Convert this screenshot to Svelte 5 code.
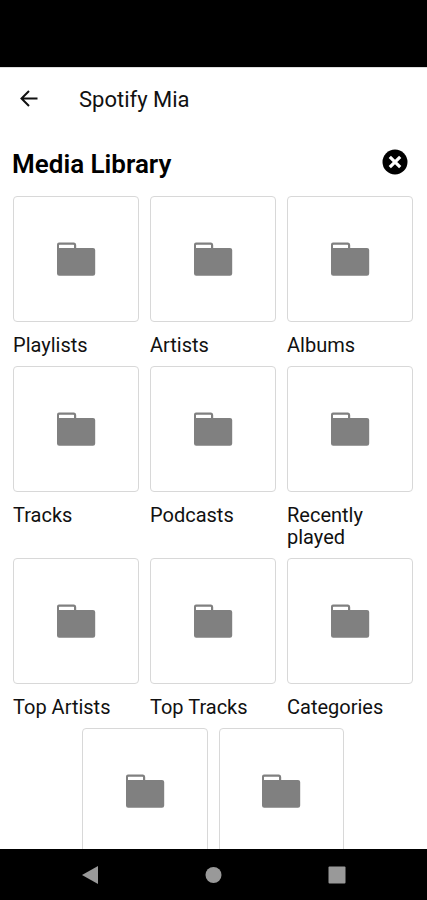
<script lang="ts">
  type Folder = { id: number, title: string }

  let folders: Folder[] = [
    { id: 1, title: 'Playlists' },
    { id: 2, title: 'Artists' },
    { id: 3, title: 'Albums' },
    { id: 4, title: 'Tracks' },
    { id: 5, title: 'Podcasts' },
    { id: 6, title: 'Recently played' },
    { id: 7, title: 'Top Artists' },
    { id: 8, title: 'Top Tracks' },
    { id: 9, title: 'Categories' },
    { id: 10, title: '' },
    { id: 11, title: '' }
  ]
</script>

<div class="screen">
  <div class="status"></div>

  <header class="appbar">
    <button class="icon-btn" aria-label="Back">
      <svg width="20" height="20" viewBox="0 0 20 20" fill="none" stroke="#111" stroke-width="2">
        <path d="M18.5 8.5H3M10 1L2.5 8.5L10 16" />
      </svg>
    </button>
    <span class="device">Spotify Mia</span>
  </header>

  <main>
    <div class="heading">
      <h1>Media Library</h1>
      <button class="icon-btn" aria-label="Close">
        <svg width="26" height="26" viewBox="0 0 26 26">
          <circle cx="13" cy="13" r="12.5" fill="#000" />
          <path d="M7.8 7.8L18.2 18.2M18.2 7.8L7.8 18.2" stroke="#fff" stroke-width="3.2" />
        </svg>
      </button>
    </div>

    <div class="grid">
      {#each folders as folder (folder.id)}
        <button class="item" aria-label={folder.title || 'Folder'}>
          <span class="tile">
            <svg width="40" height="34" viewBox="0 0 40 34">
              <path
                fill="#808080"
                fill-rule="evenodd"
                d="M3 0.5H18Q20.2 0.5 20.2 3V6H37Q39.2 6 39.2 8V31.5Q39.2 33.7 37 33.7H3.2Q1 33.7 1 31.5V2.5Q1 0.5 3 0.5ZM3.5 2.8Q3 2.8 3 3.3V6H18V3.3Q18 2.8 17.5 2.8Z"
              />
            </svg>
          </span>
          <span class="title">{folder.title}</span>
        </button>
      {/each}
    </div>
  </main>

  <nav class="sysnav">
    <button class="icon-btn" aria-label="System back">
      <svg width="18" height="18" viewBox="0 0 18 18"><path d="M17 0V18L1 9Z" fill="#999" /></svg>
    </button>
    <button class="icon-btn" aria-label="Home">
      <svg width="18" height="18" viewBox="0 0 18 18"><circle cx="9.5" cy="9" r="8" fill="#999" /></svg>
    </button>
    <button class="icon-btn" aria-label="Overview">
      <svg width="18" height="18" viewBox="0 0 18 18"><rect x="0.5" y="0.5" width="17" height="17" rx="1" fill="#999" /></svg>
    </button>
  </nav>
</div>

<style>
  .screen {
    display: flex;
    flex-direction: column;
    height: 100vh;
    overflow: hidden;
    background: #fff;
    color: #111;
    font-family: Roboto, "Liberation Sans", sans-serif;
  }
  button {
    margin: 0;
    padding: 0;
    border: 0;
    background: none;
    color: inherit;
    font: inherit;
    text-align: left;
    cursor: pointer;
  }
  .icon-btn { display: flex; align-items: center; justify-content: center; }
  .status { flex: none; height: 67px; background: #000; }

  .appbar {
    flex: none;
    display: flex;
    align-items: center;
    gap: 40px;
    height: 64px;
    padding: 0 19px;
    border-top: 1px solid #ddd;
    box-sizing: border-box;
  }
  .device { font-size: 22px; line-height: 28px; }

  main { flex: 1; min-height: 0; overflow: hidden; }
  .heading {
    display: flex;
    align-items: flex-start;
    justify-content: space-between;
    height: 65px;
    padding: 18px 19px 0 12px;
    box-sizing: border-box;
  }
  h1 { margin: 0; font-size: 26px; line-height: 30px; font-weight: 600; color: #000; }

  .grid {
    display: flex;
    flex-wrap: wrap;
    justify-content: center;
    gap: 0 11px;
    padding: 0 14px 0 13px;
  }
  .item {
    display: flex;
    flex-direction: column;
    width: calc((100% - 22px) / 3);
  }
  .tile {
    display: flex;
    align-items: center;
    justify-content: center;
    width: 100%;
    aspect-ratio: 1;
    border: 1px solid #d8d8d8;
    border-radius: 4px;
    box-sizing: border-box;
  }
  .title {
    min-height: 22px;
    padding: 12px 0 10px;
    font-size: 20px;
    line-height: 22px;
  }

  .sysnav {
    flex: none;
    display: grid;
    grid-template-columns: repeat(3, 1fr);
    height: 51px;
    padding: 0 28px;
    background: #000;
  }
</style>
